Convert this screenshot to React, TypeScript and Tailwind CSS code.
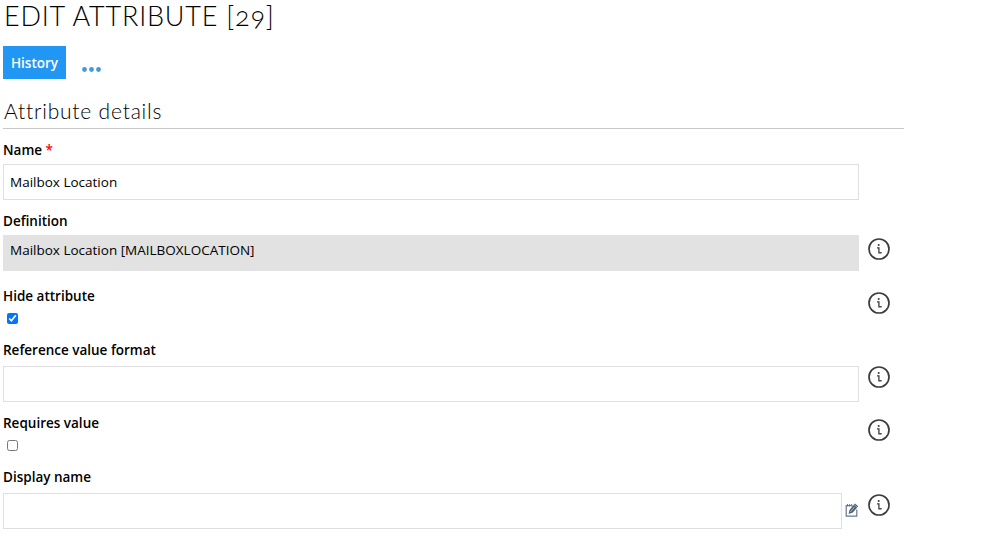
import React, { useState } from 'react';

function InfoIcon() {
  return (
    <svg className="block w-[22px] h-[22px]" viewBox="0 0 22 22" fill="none" stroke="#3c3c3c">
      <circle cx="11" cy="11" r="10" strokeWidth="1.7" />
      <circle cx="10.7" cy="6.9" r="1" fill="#3c3c3c" stroke="none" />
      <path d="M9 9.8h1.9v5.1h2.1v-1" strokeWidth="1.3" />
    </svg>
  );
}

function EditIcon() {
  return (
    <svg className="block w-[14px] h-[14px]" viewBox="0 0 14 14" fill="none" stroke="#66798f">
      <path d="M7.5 2.6H1.2v10.6h10.6V6.5" strokeWidth="1.2" />
      <path d="M2.5 1v2.4M4.6 1v2.4M6.7 1v2.4" strokeWidth="1" />
      <path d="M3.6 10.9l.9-4L9.9.6l3.3 2.7-5.4 6.3z" fill="#4d6078" stroke="none" />
      <path d="M5.4 8.9l4.1-4.8M9.5 2l2.6 2.2" stroke="#c3ccd6" strokeWidth=".8" />
    </svg>
  );
}

type FieldProps = {
  label: string;
  required?: boolean;
  className: string;
  infoClass?: string;
  children: React.ReactNode;
};

function Field({ label, required, className, infoClass, children }: FieldProps) {
  return (
    <div className={`flex items-start ${className}`}>
      <div className="w-[856px]">
        <label className="block h-5 text-[13.5px] leading-[21px] font-semibold whitespace-nowrap">
          {label}
          {required && <span className="text-[#ff0000]"> *</span>}
        </label>
        {children}
      </div>
      {infoClass && (
        <button type="button" className={`ml-[9px] ${infoClass}`} aria-label="Info">
          <InfoIcon />
        </button>
      )}
    </div>
  );
}

const inputClass = 'block h-9 w-full border border-[#dfdfdf] bg-white px-1.5 text-[13.5px] outline-none';
const checkboxClass = 'block ml-1 mt-[7px] w-[11px] h-[11px]';

export default function App() {
  const [name, setName] = useState('Mailbox Location');
  const [hidden, setHidden] = useState(true);
  const [format, setFormat] = useState('');
  const [requiresValue, setRequiresValue] = useState(false);
  const [displayName, setDisplayName] = useState('');

  return (
    <div className="h-[547px] overflow-hidden bg-white pl-[3px] font-['Open_Sans',sans-serif] text-black">
      <h1 className="h-[46px] pl-px font-['Lato',sans-serif] text-[27px] leading-[32px] font-light tracking-[0.8px] whitespace-nowrap text-black [font-variant-numeric:oldstyle-nums]">
        EDIT ATTRIBUTE [29]
      </h1>

      <div className="flex h-8">
        <button type="button" className="h-[33px] w-[63px] bg-[#2196f3] pt-px text-[13.5px] font-semibold text-white">
          History
        </button>
        <button type="button" className="ml-4 mt-[21px] h-[5px]" aria-label="More">
          <svg className="block w-[19px] h-[5px]" viewBox="0 0 19 5" fill="#4199dc">
            <circle cx="2.5" cy="2.5" r="2.4" />
            <circle cx="9.5" cy="2.5" r="2.4" />
            <circle cx="16.5" cy="2.5" r="2.4" />
          </svg>
        </button>
      </div>

      <h2 className="mt-[18px] h-[33px] w-[901px] border-b border-[#c8c8c8] pl-px font-['Lato',sans-serif] text-[21px] leading-[30px] font-light tracking-[0.8px] text-black">
        Attribute details
      </h2>

      <Field label="Name" required className="mt-[11px] h-[71px]">
        <input className={`${inputClass} mt-1`} value={name} onChange={(e) => setName(e.target.value)} />
      </Field>

      <Field label="Definition" className="h-[75px]" infoClass="mt-[27px]">
        <div className="mt-1 h-9 bg-[#e2e2e2] px-[7px] text-[13.5px] leading-[31px]">
          Mailbox Location [MAILBOXLOCATION]
        </div>
      </Field>

      <Field label="Hide attribute" className="h-[54px]" infoClass="mt-[6px]">
        <input type="checkbox" className={checkboxClass} checked={hidden} onChange={(e) => setHidden(e.target.checked)} />
      </Field>

      <Field label="Reference value format" className="h-[73px]" infoClass="mt-[26px]">
        <input className={`${inputClass} mt-1.5`} value={format} onChange={(e) => setFormat(e.target.value)} />
      </Field>

      <Field label="Requires value" className="h-[54px]" infoClass="mt-[6px]">
        <input
          type="checkbox"
          className={checkboxClass}
          checked={requiresValue}
          onChange={(e) => setRequiresValue(e.target.checked)}
        />
      </Field>

      <Field label="Display name" className="h-[70px]" infoClass="mt-[27px]">
        <div className="mt-1.5 flex items-start">
          <input className={inputClass} value={displayName} onChange={(e) => setDisplayName(e.target.value)} />
          <button type="button" className="ml-[3px] mt-[10px]" aria-label="Edit">
            <EditIcon />
          </button>
        </div>
      </Field>
    </div>
  );
}
